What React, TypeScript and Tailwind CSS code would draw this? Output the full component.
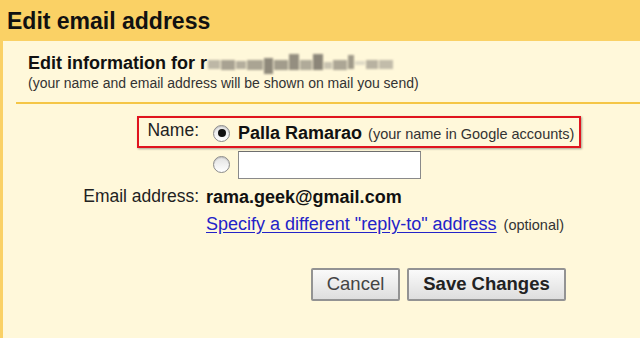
import React from "react";

function Radio({ checked }: { checked?: boolean }) {
  return (
    <div className="w-[17px] h-[17px] rounded-full border border-[#8a8a8a] bg-gradient-to-b from-[#e2e2e2] to-white flex items-center justify-center shrink-0 shadow-[inset_0_1px_1px_rgba(0,0,0,0.15)]">
      {checked && <div className="w-[8px] h-[8px] rounded-full bg-[#111]" />}
    </div>
  );
}

export default function App() {
  return (
    <div className="w-[640px] h-[338px] bg-[#fad165] font-['Liberation_Sans',Arial,sans-serif] text-[#1a1a1a] overflow-hidden">
      <div className="h-[41px] pl-[7px] flex items-center">
        <h1 className="text-[23px] font-bold leading-none text-[#111] mt-[1px]">Edit email address</h1>
      </div>
      <div className="ml-[3px] h-[297px] bg-[#fff8da] relative">
        <div className="pl-[25px] pt-[12px]">
          <div className="flex items-center h-[20px]">
            <span className="text-[18px] font-bold leading-none text-[#111]">Edit information for r</span>
            <span className="flex items-center gap-[1px] ml-[1px] blur-[1.2px]">
              <span className="w-[12px] h-[9px] bg-[#bdb7a6] mt-[3px]" />
              <span className="w-[14px] h-[10px] bg-[#a8a292] mt-[3px]" />
              <span className="w-[10px] h-[8px] bg-[#b4ae9d] mt-[3px]" />
              <span className="w-[16px] h-[10px] bg-[#aaa493] mt-[3px]" />
              <span className="w-[9px] h-[16px] bg-[#8f897b] mt-[6px]" />
              <span className="w-[14px] h-[10px] bg-[#a29c8c] mt-[3px]" />
              <span className="w-[10px] h-[16px] bg-[#948e80] -mt-[3px]" />
              <span className="w-[12px] h-[10px] bg-[#b0aa99] mt-[3px]" />
              <span className="w-[10px] h-[16px] bg-[#8c8679] -mt-[3px]" />
              <span className="w-[8px] h-[7px] bg-[#c9c3b1] mt-[5px]" />
              <span className="w-[14px] h-[10px] bg-[#aca695] mt-[3px]" />
              <span className="w-[6px] h-[14px] bg-[#a09a8a] -mt-[2px]" />
              <span className="w-[10px] h-[4px] bg-[#e0dac6]" />
              <span className="w-[12px] h-[9px] bg-[#b8b2a1] mt-[3px]" />
              <span className="w-[14px] h-[9px] bg-[#c2bcaa] mt-[3px]" />
            </span>
          </div>
          <div className="text-[14px] leading-none mt-[3px] text-[#333]">
            (your name and email address will be shown on mail you send)
          </div>
        </div>
        <div className="ml-[13px] mt-[12px] h-[2px] bg-[#f5c646]" />

        <div className="mt-[13px] flex flex-col">
          <div className="flex h-[32px] items-center">
            <div className="w-[196px] text-right text-[17.5px] leading-none text-[#222] -mt-[4px]">Name:</div>
            <div className="ml-[14px] flex items-center">
              <Radio checked />
              <span className="ml-[8px] text-[18px] font-bold leading-none text-[#111]">Palla Ramarao</span>
              <span className="ml-[6px] text-[14.5px] leading-none text-[#333] mt-[2px]">(your name in Google accounts)</span>
            </div>
          </div>
          <div className="flex h-[31px] items-center">
            <div className="w-[196px]" />
            <div className="ml-[14px] flex items-center">
              <Radio />
              <div className="ml-[8px] w-[183px] h-[28px] bg-white border border-[#8a8a8a] border-t-[#6e6e6e]" />
            </div>
          </div>
          <div className="flex h-[26px] items-center mt-[4px]">
            <div className="w-[196px] text-right text-[17.5px] leading-none text-[#222]">Email address:</div>
            <div className="ml-[7px] text-[18px] font-bold leading-none text-[#111]">rama.geek@gmail.com</div>
          </div>
          <div className="flex h-[26px] items-center mt-[1px]">
            <div className="w-[196px]" />
            <div className="ml-[7px] flex items-center">
              <a className="text-[18px] leading-none text-[#2323c8] underline underline-offset-[2px]">Specify a different "reply-to" address</a>
              <span className="ml-[7px] text-[14.5px] leading-none text-[#333] mt-[2px]">(optional)</span>
            </div>
          </div>
          <div className="flex mt-[31px]">
            <div className="w-[308px]" />
            <div className="flex gap-[7px]">
              <button className="w-[89px] h-[33px] border-2 border-[#939393] rounded-[2px] bg-gradient-to-b from-[#fafafa] to-[#dedede] text-[18.5px] text-[#444] leading-none">Cancel</button>
              <button className="w-[159px] h-[33px] border-2 border-[#939393] rounded-[2px] bg-gradient-to-b from-[#fafafa] to-[#dedede] text-[18.5px] font-bold text-[#222] leading-none">Save Changes</button>
            </div>
          </div>
        </div>

        <div className="absolute left-[134px] top-[75px] w-[444px] h-[32px] border-2 border-[#e0141e] shadow-[1px_1px_2px_rgba(0,0,0,0.35)] pointer-events-none" />
      </div>
    </div>
  );
}
